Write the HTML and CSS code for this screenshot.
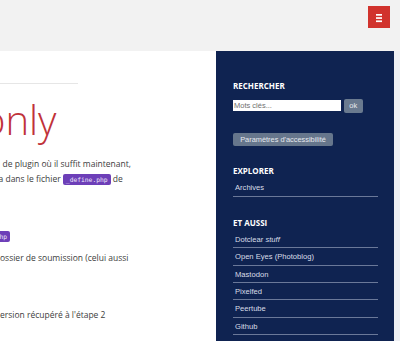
FILE: index.html
```html
<!DOCTYPE html>
<html lang="fr">
<head>
<meta charset="utf-8">
<title>Dotclear</title>
<link rel="stylesheet" href="styles.css">
</head>
<body>
<header class="topbar">
  <button class="menu-btn" aria-label="Menu">
    <svg width="22" height="22" viewBox="0 0 22 22" aria-hidden="true">
      <rect x="8" y="8" width="6" height="1.7" fill="#fff"/>
      <rect x="8" y="11.2" width="6" height="1.7" fill="#fff"/>
      <rect x="8" y="14.4" width="6" height="1.7" fill="#fff"/>
    </svg>
  </button>
</header>
<div class="page">
  <main class="content">
    <hr class="rule">
    <h1 class="title">only</h1>
    <div class="line l1">de plugin où il suffit maintenant,</div>
    <div class="line l2">a dans le fichier <code>_define.php</code> de</div>
    <div class="line l3"><code>_define.php</code></div>
    <div class="line l4">ossier de soumission (celui aussi</div>
    <div class="line l5">ersion récupéré à l'étape 2</div>
  </main>
  <aside class="sidebar">
    <h2 class="side-title">Rechercher</h2>
    <form class="search">
      <input class="search-input" type="text" placeholder="Mots clés...">
      <button class="btn-ok" type="button">ok</button>
    </form>
    <button class="btn-access" type="button">Paramètres d'accessibilité</button>
    <h2 class="side-title explore">Explorer</h2>
    <ul class="side-list">
      <li>Archives</li>
    </ul>
    <h2 class="side-title also">Et aussi</h2>
    <ul class="side-list">
      <li>Dotclear <em>stuff</em></li>
      <li>Open Eyes (Photoblog)</li>
      <li>Mastodon</li>
      <li>Pixelfed</li>
      <li>Peertube</li>
      <li>Github</li>
    </ul>
  </aside>
  <div class="edge"></div>
</div>
</body>
</html>
```
FILE: styles.css
```css
* { box-sizing: border-box; }
html, body {
  margin: 0;
  padding: 0;
  width: 400px;
  height: 341px;
  overflow: hidden;
  background: #fff;
}
.topbar {
  height: 51px;
  background: #f2f2f2;
  display: flex;
  justify-content: flex-end;
  align-items: flex-start;
  padding: 6px 10.5px 0 0;
}
.menu-btn {
  width: 22px;
  height: 22px;
  padding: 0;
  border: 0;
  background: #d1332d;
  display: block;
}
.menu-btn svg { display: block; }
.page {
  display: flex;
  height: 290px;
}
.content {
  flex: 0 0 216px;
  overflow: hidden;
  padding-top: 32px;
  font-family: "Open Sans", sans-serif;
  color: #3d3d3d;
}
.rule {
  margin: 0;
  width: 78px;
  height: 0;
  border: 0;
  border-top: 1px solid #e6e6e6;
}
.title {
  margin: 15.5px 0 0 0;
  font-size: 40px;
  line-height: 40px;
  font-weight: 300;
  color: #c0323a;
  text-indent: -18px;
  white-space: nowrap;
}
.line {
  font-size: 8.5px;
  line-height: 15px;
  white-space: nowrap;
}
.l1 { margin-top: 16px; text-indent: 2.5px; }
.l2 { text-indent: -1.5px; }
.l3 { margin-top: 41.5px; text-indent: -37.7px; }
.l4 { margin-top: 6px; }
.l5 { margin-top: 42px; }
code {
  font-family: "DejaVu Sans Mono", monospace;
  font-size: 6.3px;
  background: #6d3fb8;
  color: #eee6fa;
  padding: 2px 3px;
  border-radius: 2px;
}
.sidebar {
  flex: 0 0 178px;
  background: #0f2351;
  padding: 29px 16px 0 17px;
  font-family: "Liberation Sans", Arial, sans-serif;
}
.side-title {
  margin: 0;
  font-family: "Open Sans", sans-serif;
  font-size: 8px;
  line-height: 12px;
  font-weight: 700;
  text-transform: uppercase;
  color: #fff;
}
.search {
  margin: 7px 0 0 0;
  display: flex;
  align-items: center;
  gap: 2.5px;
}
.search-input {
  width: 108px;
  height: 11px;
  margin: 0;
  border: 0;
  padding: 0 1px;
  background: #fff;
  font-family: "Liberation Sans", Arial, sans-serif;
  font-size: 7.5px;
  color: #555;
}
.search-input::placeholder { color: #6f6f6f; }
.btn-ok {
  width: 19.5px;
  height: 13.5px;
  padding: 0;
  border: 0;
  border-radius: 2px;
  background: #6a7a8f;
  color: #e6e9ee;
  font-family: "Liberation Sans", Arial, sans-serif;
  font-size: 7.5px;
}
.btn-access {
  display: block;
  margin-top: 20px;
  width: 100px;
  height: 13.5px;
  padding: 0;
  border: 0;
  border-radius: 2px;
  background: #66768c;
  color: #e6e9ee;
  font-family: "Liberation Sans", Arial, sans-serif;
  font-size: 7.4px;
}
.explore { margin-top: 19px; }
.also { margin-top: 20px; }
.side-list {
  list-style: none;
  margin: 2.2px 0 0 0;
  padding: 0;
  width: 145px;
}
.side-list li {
  padding: 3px 2px 2px;
  font-size: 7.6px;
  line-height: 11.4px;
  color: #d9dee8;
  border-bottom: 1px solid #6a7899;
  white-space: nowrap;
}
.side-list em { font-style: italic; }
.edge {
  flex: 1;
  background: #eef0f4;
}
```
